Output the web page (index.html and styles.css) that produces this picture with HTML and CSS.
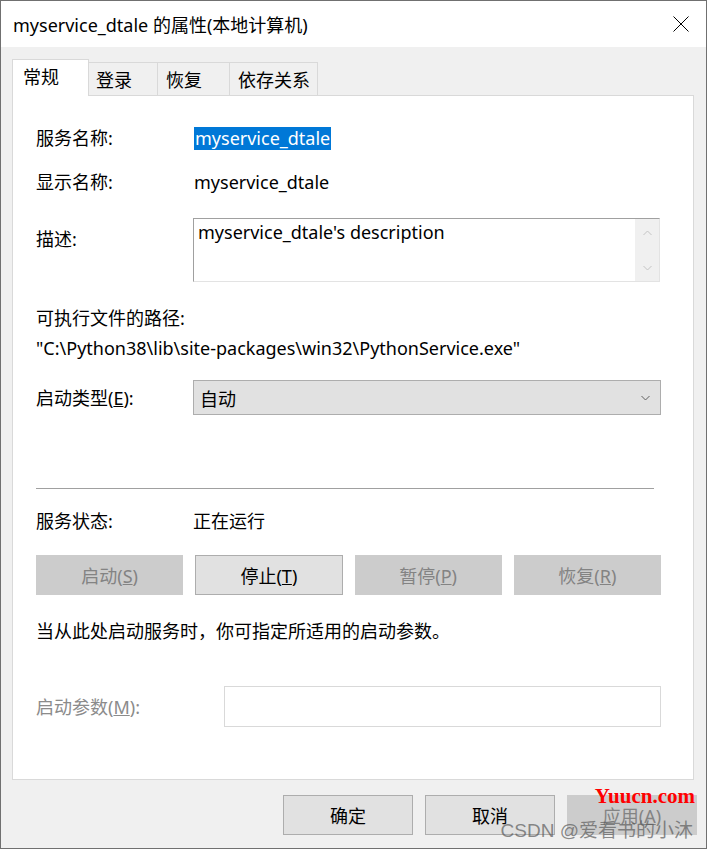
FILE: index.html
```html
<!DOCTYPE html>
<html lang="zh-CN">

<head>
    <meta charset="UTF-8">
    <meta name="viewport" content="width=device-width, initial-scale=1.0">
    <title>myservice_dtale 的属性(本地计算机)</title>
    <link rel="stylesheet" href="styles.css">
</head>

<body>
    <div class="window">
        <!-- 标题栏 -->
        <div class="titlebar">
            <span class="title">myservice_dtale 的属性(本地计算机)</span>
            <button type="button" class="close">
                <svg width="16" height="16" viewBox="0 0 16 16">
                    <path d="M0.5 0.5 L15.5 15.5 M15.5 0.5 L0.5 15.5" stroke="#000" stroke-width="1" fill="none" />
                </svg>
            </button>
        </div>

        <div class="client">
            <ul class="tabs">
                <li class="on">常规</li>
                <li>登录</li>
                <li>恢复</li>
                <li>依存关系</li>
            </ul>

            <div class="panel">
                <div class="row r-name">
                    <span class="label">服务名称:</span>
                    <span class="value"><span class="sel">myservice_dtale</span></span>
                </div>
                <div class="row r-display">
                    <span class="label">显示名称:</span>
                    <span class="value">myservice_dtale</span>
                </div>
                <div class="row r-desc">
                    <span class="label">描述:</span>
                    <div class="textarea">
                        <span class="desc-text">myservice_dtale's description</span>
                        <div class="scroll">
                            <svg width="9" height="6" viewBox="0 0 9 6"><path d="M0.5 5 L4.5 1 L8.5 5" stroke="#c4c4c4" fill="none" /></svg>
                            <svg width="9" height="6" viewBox="0 0 9 6"><path d="M0.5 1 L4.5 5 L8.5 1" stroke="#c4c4c4" fill="none" /></svg>
                        </div>
                    </div>
                </div>
                <div class="path-label">可执行文件的路径:</div>
                <div class="path">"C:\Python38\lib\site-packages\win32\PythonService.exe"</div>
                <div class="row r-type">
                    <span class="label">启动类型(<u>E</u>):</span>
                    <div class="combo">
                        <span>自动</span>
                        <svg width="9" height="6" viewBox="0 0 9 6"><path d="M0.5 1 L4.5 5 L8.5 1" stroke="#606060" fill="none" /></svg>
                    </div>
                </div>

                <hr class="sep">

                <div class="row r-status">
                    <span class="label">服务状态:</span>
                    <span class="value">正在运行</span>
                </div>
                <div class="btns">
                    <button type="button" class="btn" disabled>启动(<u>S</u>)</button>
                    <button type="button" class="btn">停止(<u>T</u>)</button>
                    <button type="button" class="btn" disabled>暂停(<u>P</u>)</button>
                    <button type="button" class="btn" disabled>恢复(<u>R</u>)</button>
                </div>
                <p class="note">当从此处启动服务时，你可指定所适用的启动参数。</p>
                <div class="row r-param">
                    <span class="label dis">启动参数(<u>M</u>):</span>
                    <div class="input"></div>
                </div>
            </div>

            <div class="footer">
                <button type="button" class="btn">确定</button>
                <button type="button" class="btn">取消</button>
                <button type="button" class="btn" disabled>应用(<u>A</u>)</button>
            </div>
        </div>

        <!-- 水印 -->
        <span class="wm-red">Yuucn.com</span>
        <span class="wm-gray">CSDN @爱看书的小沐</span>
    </div>
</body>

</html>
```

FILE: styles.css
```css
* {
    margin: 0;
    padding: 0;
    list-style: none;
    box-sizing: border-box;
}

body {
    font-family: "Noto Sans", "Noto Sans CJK SC", sans-serif;
    font-size: 18px;
    color: #000;
    background: #fff;
}

.window {
    position: relative;
    width: 707px;
    height: 849px;
    border: 1px solid #707070;
    display: flex;
    flex-direction: column;
}

.titlebar {
    height: 46px;
    background: #fff;
    display: flex;
    align-items: center;
    justify-content: space-between;
    padding: 0 17px 0 12px;
}

.title {
    font-size: 18px;
}

.close {
    border: 0;
    background: transparent;
    display: flex;
}

.client {
    flex: 1;
    background: #f0f0f0;
    padding: 12px 10px 0 11px;
    display: flex;
    flex-direction: column;
}

/* 탭 */
.tabs {
    display: flex;
    align-items: flex-end;
    height: 36px;
    position: relative;
    z-index: 1;
}

.tabs li {
    height: 33px;
    display: flex;
    align-items: center;
    padding-left: 8px;
    white-space: nowrap;
    border: 1px solid #d9d9d9;
    border-bottom: 0;
    border-left: 0;
    background: #f0f0f0;
}

.tabs li.on {
    height: 37px;
    margin-bottom: -1px;
    width: 77px;
    padding-left: 10px;
    background: #fff;
    border-left: 1px solid #d9d9d9;
    padding-bottom: 4px;
}

.tabs li:nth-child(2) { width: 69px; padding-left: 7px; }
.tabs li:nth-child(3) { width: 72px; }
.tabs li:nth-child(4) { width: 88px; }

.panel {
    flex: 1;
    background: #fff;
    border: 1px solid #d9d9d9;
    margin-right: 2px;
    padding: 0 32px 0 23px;
}

.row {
    display: flex;
    align-items: center;
}

.label {
    width: 157px;
    flex-shrink: 0;
    line-height: 24px;
}

.value {
    line-height: 24px;
}

.sel {
    background: #0078d7;
    color: #fff;
    padding: 0 1px;
    display: inline-block;
    line-height: 23px;
}

.r-name { margin-top: 30px; }
.r-name .value { margin-left: 1px; }
.r-display { margin-top: 20px; }
.r-display .value { margin-left: 1px; }

.r-desc {
    margin-top: 24px;
    align-items: flex-start;
}

.r-desc .label {
    margin-top: 9px;
}

.textarea {
    flex: 1;
    height: 64px;
    margin-right: 1px;
    border: 1px solid #e3e3e3;
    border-top-color: #a0a0a0;
    border-left-color: #a0a0a0;
    display: flex;
    justify-content: space-between;
}

.desc-text {
    padding: 1px 0 0 4px;
    line-height: 24px;
}

.scroll {
    width: 24px;
    background: #f0f0f0;
    display: flex;
    flex-direction: column;
    justify-content: space-between;
    align-items: center;
    padding: 11px 0 10px;
}

.path-label {
    margin-top: 24px;
    line-height: 24px;
}

.path {
    margin-top: 6px;
    line-height: 24px;
}

.r-type {
    margin-top: 20px;
}

.combo {
    flex: 1;
    height: 35px;
    background: #e1e1e1;
    border: 1px solid #adadad;
    display: flex;
    align-items: center;
    justify-content: space-between;
    padding: 0 10px 0 6px;
}

.sep {
    border: 0;
    border-top: 1px solid #a0a0a0;
    margin: 73px 7px 0 0;
}

.r-status {
    margin-top: 20px;
}

.btns {
    margin-top: 22px;
    display: grid;
    grid-template-columns: repeat(4, 1fr);
    gap: 12px;
}

.btn {
    height: 40px;
    background: #e1e1e1;
    border: 1px solid #adadad;
    font-family: inherit;
    font-size: 18px;
    color: #000;
}

.btn:disabled {
    background: #cccccc;
    border-color: #cccccc;
    color: #838383;
}

.note {
    margin-top: 24px;
    line-height: 24px;
}

.r-param {
    margin-top: 43px;
}

.r-param .label {
    width: 188px;
}

.label.dis {
    color: #8b8b8b;
}

.input {
    flex: 1;
    height: 41px;
    border: 1px solid #d9d9d9;
}

.footer {
    display: flex;
    justify-content: flex-end;
    gap: 12px;
    padding: 15px 0 13px;
    margin-right: -1px;
}

.footer .btn {
    width: 130px;
}

/* 워터마크 */
.wm-red {
    position: absolute;
    right: 11px;
    bottom: 39px;
    font-family: "Liberation Serif", serif;
    font-weight: bold;
    font-size: 21px;
    color: #ff0000;
}

.wm-gray {
    position: absolute;
    right: 13px;
    bottom: 6px;
    font-family: "Liberation Sans", "Noto Sans CJK SC", sans-serif;
    font-size: 19px;
    color: rgba(90, 90, 90, 0.7);
}
```
